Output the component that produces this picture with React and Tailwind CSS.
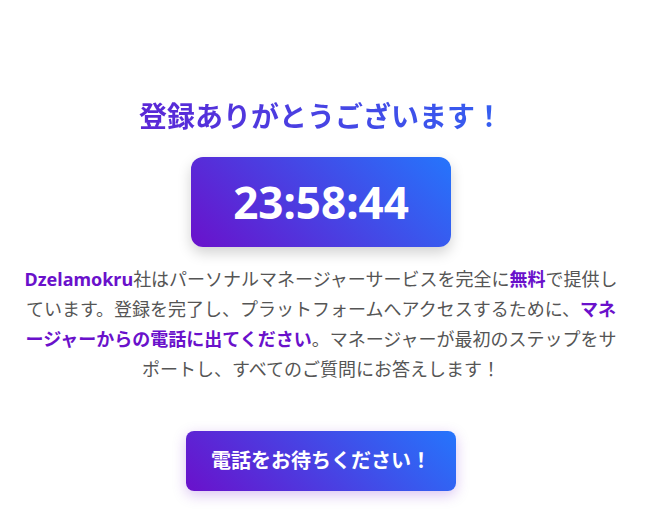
export default function App() {
  const font = { fontFamily: '"Noto Sans", "Noto Sans CJK JP", sans-serif' }
  return (
    <div style={font} className="min-h-[526px] w-full bg-white flex flex-col items-center pt-[99px] pr-[6px]">
      <h1 className="w-full text-center text-[28px] leading-[34px] font-bold bg-[linear-gradient(90deg,#6a11cb,#2575fc)] bg-clip-text text-transparent">
        登録ありがとうございます！
      </h1>
      <div className="mt-[24px] w-[260px] h-[90px] rounded-xl bg-[linear-gradient(45deg,#6a11cb,#2575fc)] shadow-[0_6px_14px_rgba(0,0,0,0.18)] flex items-center justify-center">
        <span className="text-white font-bold text-[44px] leading-none">23:58:44</span>
      </div>
      <p className="mt-[17px] w-[610px] text-center text-[18px] leading-[30px] text-[#555]">
        <b className="text-[#6a11cb]">Dzelamokru</b>社はパーソナルマネージャーサービスを完全に<b className="text-[#6a11cb]">無料</b>で提供し<br />
        ています。登録を完了し、プラットフォームへアクセスするために、<b className="text-[#6a11cb]">マネ<br />
        ージャーからの電話に出てください</b>。マネージャーが最初のステップをサ<br />
        ポートし、すべてのご質問にお答えします！
      </p>
      <button className="mt-[47px] w-[270px] h-[60px] rounded-lg bg-[linear-gradient(45deg,#6a11cb,#2575fc)] text-white font-bold text-[20px] shadow-[0_4px_14px_rgba(106,17,203,0.25)]">
        電話をお待ちください！
      </button>
    </div>
  )
}
